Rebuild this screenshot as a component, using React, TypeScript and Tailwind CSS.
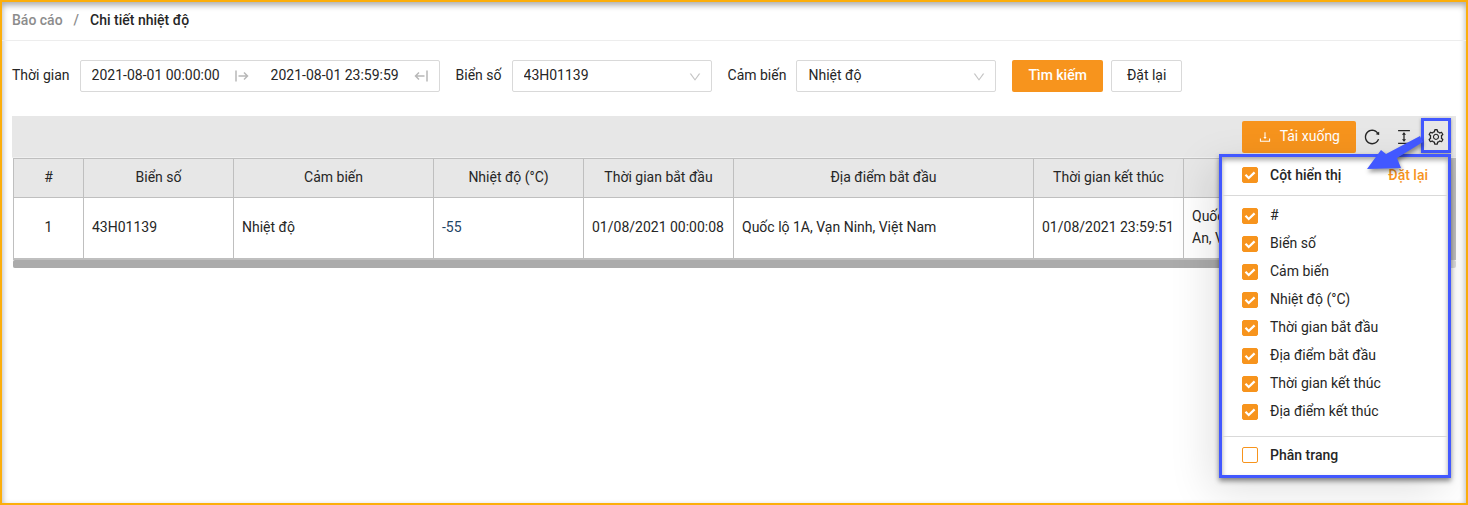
import React from "react";
import {
  AiOutlineColumnHeight,
  AiOutlineDown,
  AiOutlineDownload,
  AiOutlineReload,
  AiOutlineSetting,
} from "react-icons/ai";

const COLUMNS = [
  "#",
  "Biển số",
  "Cảm biến",
  "Nhiệt độ (°C)",
  "Thời gian bắt đầu",
  "Địa điểm bắt đầu",
  "Thời gian kết thúc",
  "Địa điểm kết thúc",
];

const COLUMN_WIDTHS = [70, 150, 200, 150, 150, 300, 150, 300];

const ROW = [
  "1",
  "43H01139",
  "Nhiệt độ",
  "-55",
  "01/08/2021 00:00:08",
  "Quốc lộ 1A, Vạn Ninh, Việt Nam",
  "01/08/2021 23:59:51",
  "Quốc lộ\nAn, Việt Nam",
];

function RangeStartIcon() {
  return (
    <svg viewBox="0 0 14 12" className="h-3 w-3.5 shrink-0" fill="none" stroke="#b8b8b8" strokeWidth="1.5">
      <path d="M1 0.5v11M3.5 6h9M9 2.5L12.5 6L9 9.5" />
    </svg>
  );
}

function RangeEndIcon() {
  return (
    <svg viewBox="0 0 14 12" className="h-3 w-3.5 shrink-0" fill="none" stroke="#b8b8b8" strokeWidth="1.5">
      <path d="M13 0.5v11M10.5 6h-9M5 2.5L1.5 6L5 9.5" />
    </svg>
  );
}

function DateRange() {
  return (
    <div className="flex h-8 w-[360px] items-center rounded-xs border border-[#d9d9d9]">
      <div className="flex flex-1 items-center px-[11px]">
        <input
          id="from"
          defaultValue="2021-08-01 00:00:00"
          className="w-full min-w-0 bg-transparent pb-0.5 outline-none"
        />
        <RangeStartIcon />
      </div>
      <div className="flex flex-1 items-center px-[11px]">
        <input
          aria-label="Thời gian kết thúc"
          defaultValue="2021-08-01 23:59:59"
          className="w-full min-w-0 bg-transparent pb-0.5 outline-none"
        />
        <RangeEndIcon />
      </div>
    </div>
  );
}

function SelectField({ id, label, value }: { id: string; label: string; value: string }) {
  return (
    <div className="flex items-center gap-2.5">
      <label htmlFor={id} className="pb-0.5">
        {label}
      </label>
      <div className="relative w-[200px]">
        <select
          id={id}
          defaultValue={value}
          className="h-8 w-full appearance-none rounded-xs border border-[#d9d9d9] bg-white px-[11px] pb-0.5 outline-none"
        >
          <option>{value}</option>
        </select>
        <AiOutlineDown className="pointer-events-none absolute top-2.5 right-2.5 size-3.5 text-[#c4c4c4]" />
      </div>
    </div>
  );
}

function Check({ label, checked, bold }: { label: string; checked: boolean; bold?: boolean }) {
  return (
    <label className="flex h-7 items-center gap-3">
      <span className="relative size-4">
        <input
          type="checkbox"
          defaultChecked={checked}
          className="peer block size-4 appearance-none rounded-xs border border-[#f7941d] bg-white checked:bg-[#f7941d]"
        />
        <svg
          viewBox="0 0 16 16"
          className="pointer-events-none absolute inset-0 hidden size-4 peer-checked:block"
          fill="none"
          stroke="#fff"
          strokeWidth="2.2"
        >
          <path d="M3.5 7.8L6.7 11L12.6 5.4" />
        </svg>
      </span>
      <span className={bold ? "font-medium" : "pb-0.5"}>{label}</span>
    </label>
  );
}

function ColumnPanel() {
  return (
    <div className="absolute top-9 right-0 z-10 w-[232px] border-3 border-[#4258ff] bg-white shadow-[0_3px_5px_rgba(0,0,0,0.45),-8px_12px_40px_rgba(0,0,0,0.12),inset_0_3px_5px_rgba(0,0,0,0.35)]">
      <div className="flex h-[39px] items-center justify-between border-b border-[#d9d9d9] px-5 pb-0.5">
        <Check label="Cột hiển thị" checked bold />
        <button type="button" className="font-medium text-[#f7941d]">
          Đặt lại
        </button>
      </div>
      <div className="border-b border-[#d9d9d9] px-5 pt-1.5 pb-2.5">
        {COLUMNS.map((name) => (
          <Check key={name} label={name} checked />
        ))}
      </div>
      <div className="px-5 pt-1 pb-1.5">
        <Check label="Phân trang" checked={false} bold />
      </div>
    </div>
  );
}

function Toolbar() {
  return (
    <div className="flex h-[42px] items-center justify-end gap-[7px] border-b border-[#f0f0f0] bg-[#e7e7e7] pr-[5px]">
      <button
        type="button"
        className="flex h-8 items-center gap-2 rounded-xs bg-[#f7941d] px-4 text-white"
      >
        <AiOutlineDownload className="size-3.5" />
        <span className="pb-0.5">Tải xuống</span>
      </button>
      <button type="button" aria-label="Tải lại">
        <AiOutlineReload className="size-[18px]" />
      </button>
      <div className="relative mb-0.5 ml-[7px] flex items-center gap-2">
        <button type="button" aria-label="Mật độ" className="pt-0.5">
          <AiOutlineColumnHeight className="size-[18px]" />
        </button>
        <button
          type="button"
          aria-label="Cài đặt cột"
          className="flex h-[35px] w-[30px] items-center justify-center border-3 border-[#4258ff] pt-0.5 shadow-[0_1px_3px_rgba(0,0,0,0.35)]"
        >
          <AiOutlineSetting className="size-[18px] shrink-0" />
        </button>
        <ColumnPanel />
        <svg
          viewBox="0 0 60 38"
          className="pointer-events-none absolute top-[18px] right-[26px] z-20 h-[38px] w-[60px] drop-shadow-[1px_3px_2px_rgba(0,0,0,0.4)]"
          fill="#4258ff"
        >
          <path d="M55 0L58 6L32 22L36 32L2 33L16 14L21 18Z" />
        </svg>
      </div>
    </div>
  );
}

function ReportTable() {
  return (
    <div className="ml-px">
      <div className="overflow-hidden border-r-5 border-b-2 border-l border-[#bfbfbf]">
        <table className="w-[1470px] table-fixed border-separate border-spacing-0">
          <colgroup>
            {COLUMN_WIDTHS.map((width, i) => (
              <col key={i} style={{ width }} />
            ))}
          </colgroup>
          <thead>
            <tr className="h-10 bg-[#e7e7e7]">
              {COLUMNS.map((name) => (
                <th key={name} className="border-y border-r border-[#bfbfbf] px-2 pb-0.5 font-normal">
                  {name}
                </th>
              ))}
            </tr>
          </thead>
          <tbody>
            <tr className="h-[60px]">
              {ROW.map((cell, i) => (
                <td
                  key={i}
                  className={`border-r border-[#bfbfbf] px-2 pb-0.5 whitespace-pre ${i === 0 ? "text-center" : ""} ${i === 3 ? "text-[#1f4666]" : ""}`}
                >
                  {cell}
                </td>
              ))}
            </tr>
          </tbody>
        </table>
      </div>
      <div className="h-2 rounded-xs bg-[#dcdcdc]">
        <div className="h-2 w-[98%] rounded-xs bg-[#ababab]" />
      </div>
    </div>
  );
}

export default function App() {
  return (
    <div className="min-h-screen border-2 border-[#fcae0b] bg-white font-[Roboto,'Liberation_Sans',sans-serif] text-sm leading-[22px] text-[#262626] shadow-[inset_0_3px_6px_rgba(0,0,0,0.35)]">
      <nav className="flex h-[39px] items-center gap-[11px] border-b border-[#ededed] px-2.5 pb-0.5 font-medium">
        <a href="#reports" className="text-[#8c8c8c]">
          Báo cáo
        </a>
        <span className="text-[#8c8c8c]">/</span>
        <span>Chi tiết nhiệt độ</span>
      </nav>
      <main className="px-2.5">
        <form className="flex items-center gap-4 pt-[19px] pb-6" onSubmit={(e) => e.preventDefault()}>
          <div className="flex items-center gap-2.5">
            <label htmlFor="from" className="pb-0.5">
              Thời gian
            </label>
            <DateRange />
          </div>
          <SelectField id="plate" label="Biển số" value="43H01139" />
          <SelectField id="sensor" label="Cảm biến" value="Nhiệt độ" />
          <div className="flex gap-2">
            <button type="submit" className="h-8 rounded-xs bg-[#f7941d] px-4 pb-0.5 font-medium text-white">
              Tìm kiếm
            </button>
            <button type="button" className="h-8 rounded-xs border border-[#d9d9d9] bg-white px-[15px] pb-0.5">
              Đặt lại
            </button>
          </div>
        </form>
        <Toolbar />
        <ReportTable />
      </main>
    </div>
  );
}
